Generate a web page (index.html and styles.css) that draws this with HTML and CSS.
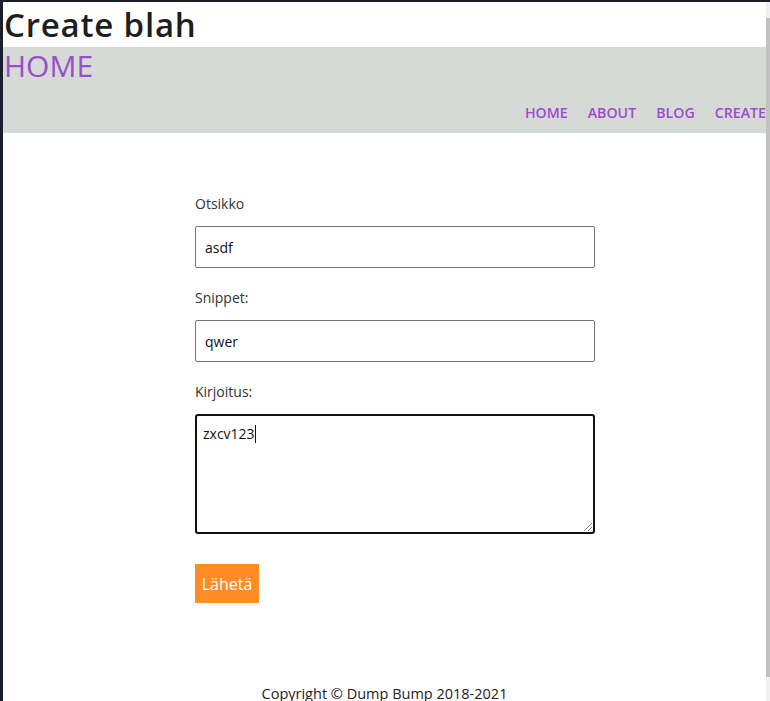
FILE: index.html
```html
<!DOCTYPE html>
<html lang="fi">
<head>
<meta charset="utf-8">
<title>Create blah</title>
<link rel="stylesheet" href="styles.css">
</head>
<body>
<div class="frame">
  <div class="page">
    <h1 class="title">Create blah</h1>
    <header class="band">
      <a class="brand" href="#">HOME</a>
      <nav class="nav">
        <a href="#">HOME</a>
        <a href="#">ABOUT</a>
        <a href="#">BLOG</a>
        <a href="#">CREATE</a>
      </nav>
    </header>
    <main class="main">
      <form class="form">
        <label class="label" for="otsikko">Otsikko</label>
        <input class="field" id="otsikko" type="text" value="asdf">
        <label class="label" for="snippet">Snippet:</label>
        <input class="field" id="snippet" type="text" value="qwer">
        <label class="label" for="kirjoitus">Kirjoitus:</label>
        <div class="area"><span class="area-text">zxcv123</span><span class="caret"></span><span class="grip"></span></div>
        <button class="submit" type="button">Lähetä</button>
      </form>
    </main>
    <footer class="footer">Copyright © Dump Bump 2018-2021</footer>
  </div>
  <div class="scrollbar"><div class="thumb"></div></div>
</div>
</body>
</html>
```
FILE: styles.css
```css
* { box-sizing: border-box; }
html, body { margin: 0; padding: 0; }
body {
  background: #1b1f2b;
  font-family: "Open Sans", "Noto Sans", sans-serif;
  color: #222;
}
.frame {
  display: flex;
  height: 701px;
  padding: 2px 0 0 3px;
  overflow: hidden;
}
.page {
  flex: 1;
  background: #fff;
  overflow: hidden;
  display: flex;
  flex-direction: column;
}
.page > * { flex-shrink: 0; }
.scrollbar {
  width: 4px;
  background: #f0f0f0;
  padding-top: 16px;
}
.thumb {
  height: 659px;
  background: #c1c1c1;
}
.title {
  margin: 0;
  padding-left: 1px;
  font-size: 33px;
  font-weight: 600;
  letter-spacing: 0.8px;
  line-height: 45px;
  color: #1e1e1e;
}
.band {
  height: 86px;
  background: #d6dad7;
  display: flex;
  flex-direction: column;
}
.brand {
  padding-left: 1px;
  font-size: 30px;
  line-height: 38px;
  color: #9b4dca;
  text-decoration: none;
}
.nav {
  margin-top: auto;
  display: flex;
  justify-content: flex-end;
  gap: 20px;
  padding-bottom: 10px;
}
.nav a {
  font-size: 14.2px;
  line-height: 20px;
  font-weight: 600;
  color: #9b4dca;
  text-decoration: none;
}
.main {
  padding: 61px 0 0 192px;
}
.form {
  width: 400px;
  display: flex;
  flex-direction: column;
}
.label {
  font-size: 14px;
  line-height: 20px;
  color: #333;
  margin-bottom: 12px;
}
.field {
  height: 42px;
  border: 1px solid #767676;
  border-radius: 2px;
  padding: 0 9px;
  font-family: inherit;
  font-size: 14px;
  color: #111;
  margin: 0 0 20px 0;
  outline: none;
}
.area {
  position: relative;
  height: 120px;
  border: 2px solid #111;
  border-radius: 3px;
  padding: 8px 6px;
  font-size: 14px;
  line-height: 20px;
  color: #111;
  display: flex;
  align-items: flex-start;
  margin-bottom: 30px;
}
.caret {
  width: 1px;
  height: 18px;
  margin-top: 1px;
  background: #111;
}
.grip {
  position: absolute;
  right: 1px;
  bottom: 1px;
  width: 8px;
  height: 8px;
  background: linear-gradient(135deg, transparent 45%, #888 45%, #888 52%, transparent 52%, transparent 70%, #888 70%, #888 77%, transparent 77%);
}
.submit {
  align-self: flex-start;
  width: 64px;
  height: 39px;
  border: none;
  border-radius: 0;
  background: #ff8c26;
  color: #fff;
  font-family: inherit;
  font-size: 16px;
  padding: 0;
}
.footer {
  margin-top: 81px;
  text-align: center;
  font-size: 14.5px;
  line-height: 20px;
  color: #222;
}
```
